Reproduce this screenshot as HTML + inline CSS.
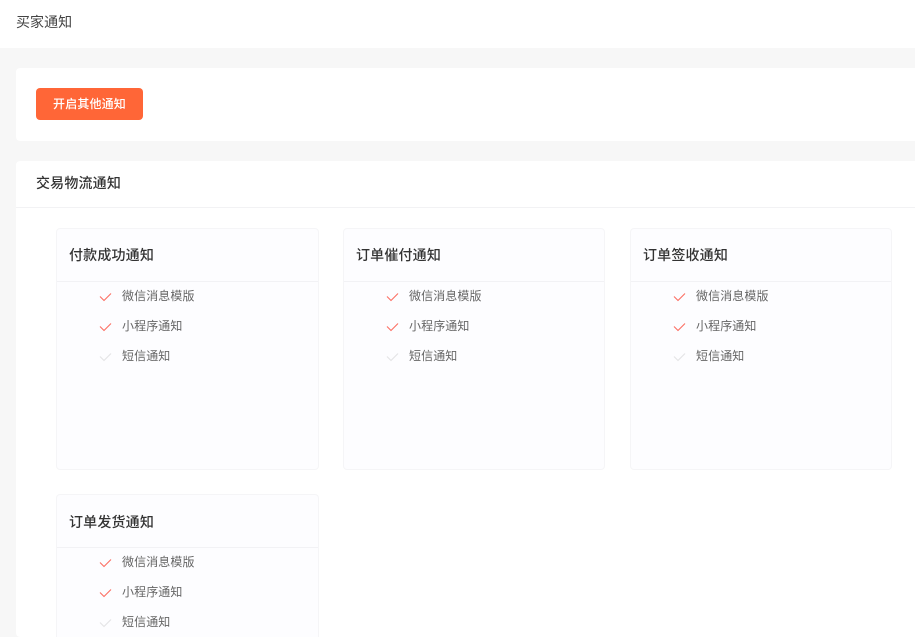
<!DOCTYPE html>
<html lang="zh"><head><meta charset="utf-8"><title>买家通知</title>
<style>
*{box-sizing:border-box;margin:0;padding:0}
html,body{width:915px;height:637px;overflow:hidden;background:#f7f7f7}
body{position:relative;font-family:"Liberation Sans","Noto Sans CJK SC",sans-serif;color:#333}
.a{position:absolute;white-space:nowrap}
.top{left:0;top:0;width:915px;height:48px;background:#fff}
.panel{left:16px;width:899px;background:#fff;border-radius:4px 0 0 4px}
.btn{left:36px;top:88px;width:107px;height:32px;background:#ff6637;border-radius:4px;color:#fff;font-size:12px;font-weight:500;letter-spacing:.15px;line-height:32px;text-align:center}
.sep{left:16px;top:207px;width:899px;height:1px;background:#f2f2f4}
.card{width:262px;height:241.5px;background:#fdfdff;border:1px solid #f5f5f7;border-radius:4px;overflow:hidden}
.card .t{left:12px;top:16px;font-size:14px;font-weight:500;letter-spacing:.17px;line-height:20px;color:#333}
.card .l{left:0;top:52px;width:261px;height:1px;background:#f2f2f5}
.card span{color:#666;font-size:12px;letter-spacing:.1px;line-height:18px;left:65px}
.card svg{left:42px;width:14px;height:12px}
</style></head><body>
<div class="a top"></div>
<div class="a" style="left:16px;top:12px;font-size:14px;letter-spacing:.05px;line-height:20px;color:#444">买家通知</div>
<div class="a panel" style="top:68px;height:72.5px"></div>
<div class="a btn">开启其他通知</div>
<div class="a panel" style="top:161px;height:476px"></div>
<div class="a sep"></div>
<div class="a" style="left:36px;top:173px;font-size:14px;font-weight:500;letter-spacing:.17px;line-height:20px;color:#333">交易物流通知</div>

<div class="a card" style="left:56px;top:228px;width:263px">
<div class="a t">付款成功通知</div><div class="a l"></div>
<svg class="a" style="top:62px" viewBox="0 0 14 12"><path d="M1 5.5L5 9.5L12 2.5" fill="none" stroke="#fb6e62" stroke-width="1.1"/></svg><span class="a" style="top:58px">微信消息模版</span>
<svg class="a" style="top:92px" viewBox="0 0 14 12"><path d="M1 5.5L5 9.5L12 2.5" fill="none" stroke="#fb6e62" stroke-width="1.1"/></svg><span class="a" style="top:88px">小程序通知</span>
<svg class="a" style="top:122px" viewBox="0 0 14 12"><path d="M1 5.5L5 9.5L12 2.5" fill="none" stroke="#e4e4e6" stroke-width="1.1"/></svg><span class="a" style="top:118px">短信通知</span>
</div>

<div class="a card" style="left:343px;top:228px">
<div class="a t">订单催付通知</div><div class="a l"></div>
<svg class="a" style="top:62px" viewBox="0 0 14 12"><path d="M1 5.5L5 9.5L12 2.5" fill="none" stroke="#fb6e62" stroke-width="1.1"/></svg><span class="a" style="top:58px">微信消息模版</span>
<svg class="a" style="top:92px" viewBox="0 0 14 12"><path d="M1 5.5L5 9.5L12 2.5" fill="none" stroke="#fb6e62" stroke-width="1.1"/></svg><span class="a" style="top:88px">小程序通知</span>
<svg class="a" style="top:122px" viewBox="0 0 14 12"><path d="M1 5.5L5 9.5L12 2.5" fill="none" stroke="#e4e4e6" stroke-width="1.1"/></svg><span class="a" style="top:118px">短信通知</span>
</div>

<div class="a card" style="left:630px;top:228px">
<div class="a t">订单签收通知</div><div class="a l"></div>
<svg class="a" style="top:62px" viewBox="0 0 14 12"><path d="M1 5.5L5 9.5L12 2.5" fill="none" stroke="#fb6e62" stroke-width="1.1"/></svg><span class="a" style="top:58px">微信消息模版</span>
<svg class="a" style="top:92px" viewBox="0 0 14 12"><path d="M1 5.5L5 9.5L12 2.5" fill="none" stroke="#fb6e62" stroke-width="1.1"/></svg><span class="a" style="top:88px">小程序通知</span>
<svg class="a" style="top:122px" viewBox="0 0 14 12"><path d="M1 5.5L5 9.5L12 2.5" fill="none" stroke="#e4e4e6" stroke-width="1.1"/></svg><span class="a" style="top:118px">短信通知</span>
</div>

<div class="a card" style="left:56px;top:494px;width:263px;height:143px;border-bottom:0;border-radius:4px 4px 0 0">
<div class="a t" style="top:17px">订单发货通知</div><div class="a l"></div>
<svg class="a" style="top:62px" viewBox="0 0 14 12"><path d="M1 5.5L5 9.5L12 2.5" fill="none" stroke="#fb6e62" stroke-width="1.1"/></svg><span class="a" style="top:58px">微信消息模版</span>
<svg class="a" style="top:92px" viewBox="0 0 14 12"><path d="M1 5.5L5 9.5L12 2.5" fill="none" stroke="#fb6e62" stroke-width="1.1"/></svg><span class="a" style="top:88px">小程序通知</span>
<svg class="a" style="top:122px" viewBox="0 0 14 12"><path d="M1 5.5L5 9.5L12 2.5" fill="none" stroke="#e4e4e6" stroke-width="1.1"/></svg><span class="a" style="top:118px">短信通知</span>
</div>
</body></html>
